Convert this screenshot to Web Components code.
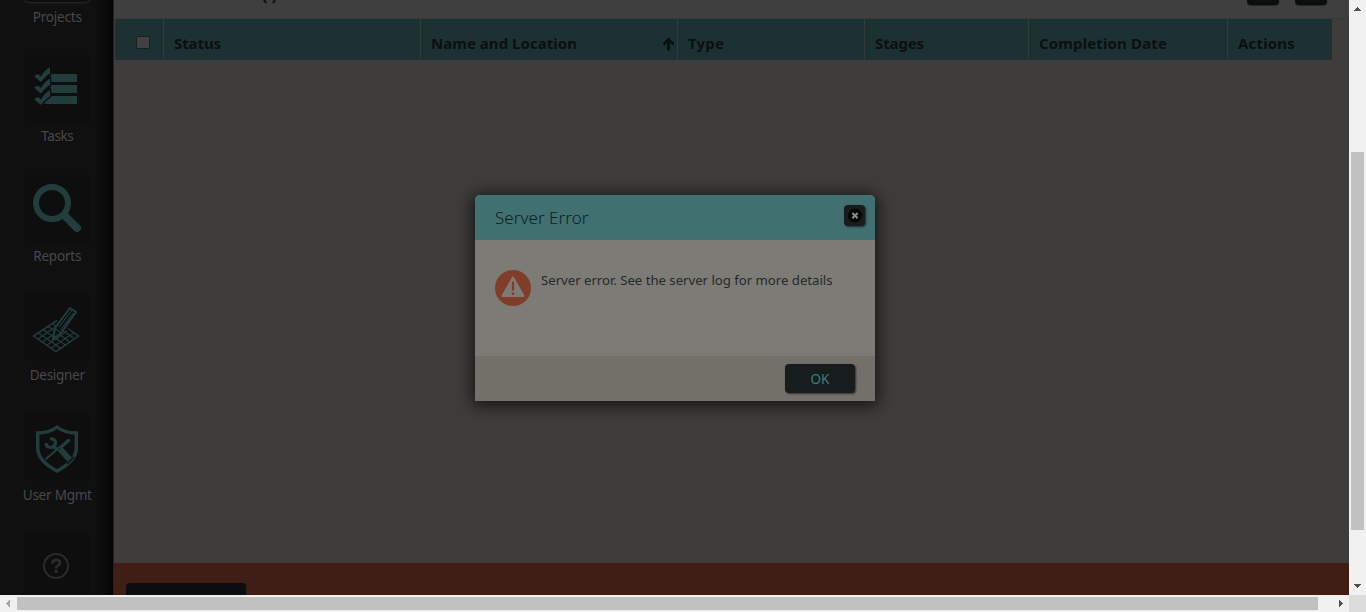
<!DOCTYPE html>
<html lang="en">
<head>
<meta charset="utf-8">
<title>Server Error</title>
<style>
html,body{margin:0;height:100%;overflow:hidden;background:#f0f0f0}
body{font-family:"Noto Sans","Open Sans",sans-serif}
</style>
</head>
<body>
<app-window></app-window>
<script>
const define = (name, html, setup) => {
  const t = document.createElement('template');
  t.innerHTML = html;
  customElements.define(name, class extends HTMLElement {
    connectedCallback() {
      if (this.shadowRoot) return;
      this.attachShadow({mode: 'open'}).appendChild(t.content.cloneNode(true));
      if (setup) setup(this, this.shadowRoot);
    }
  });
};

/* Spaces its text out so that it fills the given width. */
define('fit-text', `<style>:host{display:inline-block;white-space:nowrap}span{display:inline-block}</style><span><slot></slot></span>`, (el, root) => {
  const s = root.querySelector('span');
  const w = +el.getAttribute('width'), n = el.textContent.length;
  s.style.letterSpacing = ((w - s.getBoundingClientRect().width) / n) + 'px';
});

define('nav-item', `<style>
:host{display:flex;flex-direction:column;align-items:center;height:119.6px;flex:none;color:#48484a;font-size:13.5px}
.tile{width:67px;height:67px;border-radius:6px;background:#0e0e0e;display:flex;align-items:center;justify-content:center;box-sizing:border-box}
:host([active]) .tile{border:1px solid #202226;box-shadow:0 0 3px #24272b}
.label{line-height:20px;margin-top:4px}
::slotted(svg){display:block}
</style><div class="tile"><slot name="icon"></slot></div><div class="label"><slot></slot></div>`);

define('side-nav', `<style>
:host{display:block;width:114px;height:595px;overflow:hidden;box-sizing:border-box;border-right:1px solid #222;
background:linear-gradient(90deg,transparent 94px,#0a0a0a 106px,#030303 113px),repeating-conic-gradient(#0f0f10 0 25%,#111112 0 50%) 0 0/4px 4px}
nav{display:flex;flex-direction:column;margin-top:-64.4px;padding-left:1.500px}
</style><nav>
<nav-item active><fit-text width="49">Projects</fit-text></nav-item>
<nav-item><svg slot="icon" width="67" height="67" viewBox="24 55 67 67" fill="#213d3c"><path d="M51 74h26v8H48l2-3zM51 85h26v8H48l2-3zM48 96h29v8H44z"/><g stroke="#0e0e0e" stroke-width="2.500" paint-order="stroke"><path d="M34 76l4-2 3 2.500c2-4 5-7 9-9.500v6.500c-3.500 2-6 4.500-8.500 8h-1.500z"/><path d="M34 87.500l4-2 3 2.500c2-4 5-7 9-9.500v6.500c-3.500 2-6 4.500-8.500 8h-1.500z"/><path d="M34 99l4-2 3 2.500c2-4 5-7 9-9.500v6.500c-3.500 2-6 4.500-8.500 8h-1.500z"/></g></svg><fit-text width="32">Tasks</fit-text></nav-item>
<nav-item><svg slot="icon" width="67" height="67" viewBox="24 175 67 67" fill="none" stroke="#213d3c"><circle cx="52" cy="203" r="16" stroke-width="6"/><path d="M64 215l13 13" stroke-width="8"/><path d="M76.500 227.500l.5.5" stroke-width="8" stroke-linecap="round"/></svg><fit-text width="48">Reports</fit-text></nav-item>
<nav-item><svg slot="icon" width="67" height="67" viewBox="24 294 67 67" fill="none" stroke="#213d3c" stroke-width="1.200"><path d="M57 320.500L33.500 336 56 351.500 78.500 336 68 328.500" stroke-width="1.500"/><path d="M52.500 323.500L75 339M48 326.500l22.500 16M43 329.500l23 16M38.500 333l22.500 15.500M38 339l20-14M42.500 342l20-14M47 345l20-14M51.500 348l22-15"/><path d="M53 339l2-11 15-20 6 4-15 21z" fill="#0e0e0e" stroke-width="2"/><path d="M55 328l6 5M59 327l13-17M60.500 330l13-17M53 339l3-3"/></svg><fit-text width="55">Designer</fit-text></nav-item>
<nav-item><svg slot="icon" width="67" height="67" viewBox="24 414 67 67" fill="none" stroke="#213d3c"><path d="M57 427c-5 4-12 6-19.300 6v15c0 10 8 17 19.300 23 11.300-6 19.300-13 19.300-23v-15C69 433 62 431 57 427z" stroke-width="3.500"/><path d="M50 439c5-1 7 4 4 7-3 3-8 1-8-3" stroke-width="3.200"/><path d="M53 446l5 4" stroke-width="3"/><path d="M46 459l15-13" stroke-width="2" stroke-linecap="round"/><path d="M61 447l7.500-6.500" stroke-width="3.500" stroke-linecap="round"/><path d="M60 449l10 11" stroke-width="6"/><path d="M67 464l7-7" stroke="#0e0e0e" stroke-width="1.500"/></svg><fit-text width="69">User Mgmt</fit-text></nav-item>
<nav-item><svg slot="icon" width="67" height="67" viewBox="24 534 67 67" fill="none" stroke="#292b2e"><circle cx="56" cy="566" r="12" stroke-width="2"/><path d="M52.500 563.500c.2-5 7.500-4.500 7.500-.7 0 3-4 2.800-4 6" stroke-width="2.800"/><path d="M54.500 571.500h3.200" stroke-width="3"/></svg></nav-item>
</nav>`);

define('column-head', `<style>
:host{display:flex;align-items:center;justify-content:space-between;box-sizing:border-box;padding:7px 2px 0 10px;border-left:1px dotted #464643;font-size:15px;font-weight:700;color:#0c0f10}
:host([first]){border-left:0;padding:6px 0 0 21px}
</style><slot></slot>`);

define('project-table', `<style>
:host{display:block}
.bar{height:18px;background:#3f3f3f;overflow:hidden;display:flex;border-bottom:1px solid #393b3b;box-sizing:content-box}
.count{margin:-14px auto 0 148px;font:700 16px/18px "Noto Sans",sans-serif;letter-spacing:4px;color:#0d0e0e}
.btn{width:32px;height:20px;margin-top:-15px;margin-right:16px;border-radius:4px;background:#0b0e0e;box-shadow:0 1px 1px #292929}
.btn:last-child{margin-right:22px}
.head{display:grid;grid-template-columns:48px 257px 257px 187px 164px 199px 105px;width:1217px;height:41px;margin-left:1px;background:#1c3232}
.box{width:11.500px;height:11.500px;border:1px solid #1c1d1d;border-radius:2px;background:#414141}
svg{margin-top:1px}
</style>
<div class="bar"><span class="count">()</span><span class="btn"></span><span class="btn"></span></div>
<div class="head">
<column-head first><span class="box"></span></column-head>
<column-head><fit-text width="47">Status</fit-text></column-head>
<column-head><fit-text width="146">Name and Location</fit-text><svg width="13" height="14" viewBox="0 0 13 14" fill="none" stroke="#0c0f10" stroke-width="2.800"><path d="M6.500 13.500V2M1.500 7.500l5-5 5 5"/></svg></column-head>
<column-head><fit-text width="36">Type</fit-text></column-head>
<column-head><fit-text width="49">Stages</fit-text></column-head>
<column-head><fit-text width="128">Completion Date</fit-text></column-head>
<column-head><fit-text width="57">Actions</fit-text></column-head>
</div>`);

define('error-dialog', `<style>
:host{display:flex;flex-direction:column;width:400px;height:206px;border-radius:5px 5px 0 0;background:#7d7b76;box-shadow:0 2px 16px 3px rgba(0,0,0,.65);color:#242a2b}
header{height:45px;box-sizing:border-box;background:#40706f;border-radius:5px 5px 0 0;display:flex;justify-content:space-between;padding:10px 10px 0 20px;font-size:17px;font-weight:300;color:#101e20}
header fit-text{line-height:25px}
.close{width:21px;height:21px;border-radius:4px;background:#191c1d;box-shadow:1px 1px 2px #1c3030}
.close svg{display:block}
.body{flex:1;display:flex;padding:30px 20px 0;gap:10px;font-size:13.200px}
.body fit-text{line-height:20px}
footer{height:45px;box-sizing:border-box;background:#736f69;padding:8px 20px;display:flex;justify-content:flex-end}
button{width:70px;height:29px;padding:1px 0 0;border:0;border-radius:4px;background:#171c1d;color:#3d7c7b;font:13.500px "Noto Sans",sans-serif;box-shadow:1px 1px 2px #35332f}
</style>
<header><fit-text width="93.500">Server Error</fit-text><span class="close"><svg width="21" height="21" viewBox="0 0 21 21"><circle cx="11" cy="10.500" r="7" fill="#050606"/><path d="M8.400 8l5.200 5.300M13.600 8l-5.200 5.300" stroke="#8c8a85" stroke-width="2"/></svg></span></header>
<div class="body"><svg width="36" height="36" viewBox="0 0 36 36"><circle cx="18" cy="18" r="18" fill="#823c2a"/><path d="M18 7.500L28.500 26h-21z" fill="#7d7b76" stroke="#7d7b76" stroke-width="2" stroke-linejoin="round"/><path d="M18 11.500v9M18 22.500v2.500" stroke="#823c2a" stroke-width="2.200"/></svg><fit-text width="291.500">Server error. See the server log for more details</fit-text></div>
<footer><button><fit-text width="19">OK</fit-text></button></footer>`);

define('scroll-bar', `<style>
:host{display:flex;background:#f1f1f1;align-items:center}
:host([vertical]){flex-direction:column}
i{display:block;flex:none;background:#c1c1c1}
:host([vertical]) i{width:13px;height:378px}
:host(:not([vertical])) i{height:13px;width:1301px}
svg{flex:none;display:block}
.a,.b{width:17px;height:17px}
:host([vertical]) .a{margin-bottom:135px}
:host([vertical]) .b{margin-top:auto}
:host(:not([vertical])) .b{margin-left:auto}
</style><svg class="a" viewBox="0 0 17 17" shape-rendering="crispEdges"><path/></svg><i></i><svg class="b" viewBox="0 0 17 17" shape-rendering="crispEdges"><path/></svg>`, (el, root) => {
  const [a, b] = root.querySelectorAll('path');
  const v = el.hasAttribute('vertical');
  a.setAttribute('d', v ? 'M5 11l3.500-4 3.500 4z' : 'M10 5v7L6 8.500z');
  b.setAttribute('d', v ? 'M5 6l3.500 4L12 6z' : 'M7 5v7l4-3.500z');
  a.setAttribute('fill', v ? '#505050' : '#a3a3a3');
  b.setAttribute('fill', '#505050');
});

define('app-window', `<style>
:host{display:grid;grid-template:595px 17px/114px 1235px 17px;width:1366px;height:612px;position:relative;overflow:hidden}
main{display:flex;flex-direction:column;background:#3e3d3b;overflow:hidden}
.bottom{height:32px;margin-top:auto;background:#401e15;padding-left:12px;box-sizing:border-box;padding-top:20px}
.bottom div{width:120px;height:24px;border-radius:4px;background:#0b0e0e;box-shadow:1px 0 1px #292019}
error-dialog{position:absolute;left:475px;top:195px}
.h{grid-column:1/3}
.corner{background:#dcdcdc}
</style><side-nav></side-nav><main><project-table></project-table><div class="bottom"><div></div></div></main><scroll-bar vertical></scroll-bar><scroll-bar class="h"></scroll-bar><div class="corner"></div><error-dialog></error-dialog>`);
</script>
</body>
</html>
